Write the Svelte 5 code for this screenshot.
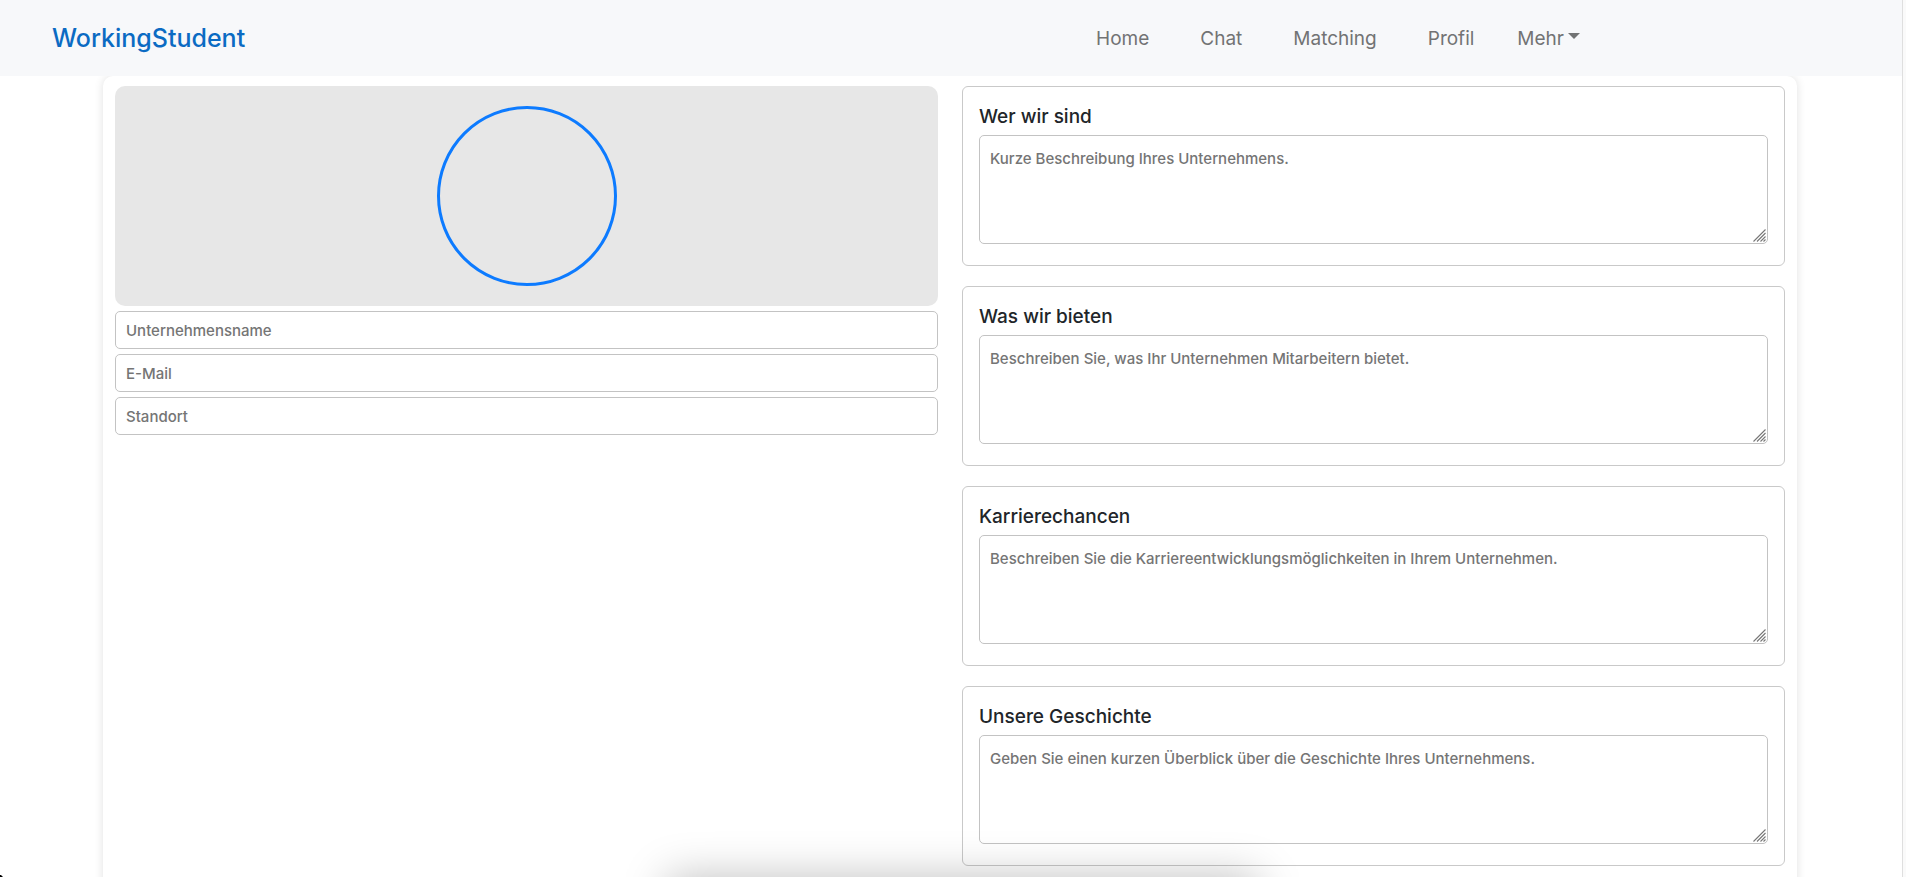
<script>
  const links = ['Home', 'Chat', 'Matching', 'Profil'];
  const fields = [
    { id: 'name', type: 'text', label: 'Unternehmensname' },
    { id: 'email', type: 'email', label: 'E-Mail' },
    { id: 'location', type: 'text', label: 'Standort' }
  ];
  const sections = [
    { id: 'about', title: 'Wer wir sind', hint: 'Kurze Beschreibung Ihres Unternehmens.' },
    { id: 'offer', title: 'Was wir bieten', hint: 'Beschreiben Sie, was Ihr Unternehmen Mitarbeitern bietet.' },
    { id: 'career', title: 'Karrierechancen', hint: 'Beschreiben Sie die Karriereentwicklungsmöglichkeiten in Ihrem Unternehmen.' },
    { id: 'history', title: 'Unsere Geschichte', hint: 'Geben Sie einen kurzen Überblick über die Geschichte Ihres Unternehmens.' }
  ];
</script>

<div class="shell">
  <div class="page">
    <header class="navbar">
      <a class="brand" href="#home">WorkingStudent</a>
      <nav class="nav">
        {#each links as link}
          <a href="#{link.toLowerCase()}">{link}</a>
        {/each}
        <button class="more" type="button" aria-haspopup="true">
          Mehr
          <svg width="12" height="6" viewBox="0 0 12 6" aria-hidden="true"><path d="M0 0h12L6 6z" fill="currentColor" /></svg>
        </button>
      </nav>
    </header>

    <main class="profile">
      <div class="column">
        <div class="cover"><div class="avatar"></div></div>
        {#each fields as field}
          <input id={field.id} type={field.type} placeholder={field.label} aria-label={field.label} />
        {/each}
      </div>

      <div class="column sections">
        {#each sections as section}
          <section class="card">
            <label for={section.id}>{section.title}</label>
            <div class="editor">
              <textarea id={section.id} placeholder={section.hint}></textarea>
              <svg class="grip" width="13" height="13" viewBox="0 0 13 13" aria-hidden="true">
                <path d="M0.5 12.5l12-12M4 12.5l8.5-8.5M7.5 12.5l5-5M10.5 12.5l2-2" stroke="#777" stroke-width="1.1" fill="none" />
              </svg>
            </div>
          </section>
        {/each}
      </div>
    </main>
  </div>
  <div class="track"></div>
  <div class="dock-shadow"></div>
  <svg class="pointer" width="3" height="2" viewBox="0 0 3 2" aria-hidden="true"><path d="M0 0h1l2 2H0z" /></svg>
</div>

<style>
  :global(body) {
    margin: 0;
    background: #fff;
    color: #212529;
    font-family: Inter, 'Liberation Sans', sans-serif;
  }
  .shell {
    position: relative;
    display: flex;
    height: 100vh;
    overflow: hidden;
  }
  .page {
    flex: 1;
    min-width: 0;
  }
  .track {
    width: 3px;
    border-left: 1px solid #dfdfdf;
    background: #fafafa;
  }
  .navbar {
    position: relative;
    display: flex;
    align-items: center;
    justify-content: space-between;
    height: 76px;
    padding: 0 322px 0 52px;
    background: #f7f8fa;
    z-index: 1;
  }
  a {
    color: inherit;
    text-decoration: none;
  }
  .brand {
    color: #0b6bc3;
    font-size: 25px;
    font-weight: 500;
  }
  .nav {
    display: flex;
    align-items: center;
    gap: 51px;
    color: #727374;
    font-size: 19px;
  }
  .more {
    display: flex;
    align-items: center;
    gap: 4px;
    margin-left: -8px;
    padding: 0;
    border: 0;
    background: none;
    color: inherit;
    font: inherit;
  }
  .more svg {
    margin-bottom: 4px;
  }
  .profile {
    display: grid;
    grid-template-columns: 1fr 1fr;
    gap: 24px;
    min-height: 100vh;
    margin: 0 105px 0 103px;
    padding: 10px 12px;
    box-sizing: border-box;
    border-radius: 10px;
    background: #fff;
    box-shadow: 0 0 10px rgba(0, 0, 0, 0.12);
  }
  .column {
    display: flex;
    flex-direction: column;
    gap: 5px;
    min-width: 0;
  }
  .sections {
    gap: 20px;
  }
  .cover {
    display: flex;
    justify-content: center;
    padding: 20px;
    border-radius: 10px;
    background: #e7e7e7;
  }
  .avatar {
    width: 174px;
    height: 174px;
    border: 3px solid #0d7bff;
    border-radius: 50%;
  }
  input,
  textarea {
    box-sizing: border-box;
    width: 100%;
    border: 1px solid #c3c3c3;
    border-radius: 5px;
    background: #fff;
    color: #212529;
    font-family: inherit;
    font-size: 15px;
    font-weight: 500;
    line-height: 24px;
  }
  input {
    height: 38px;
    padding: 0 10px;
  }
  input::placeholder,
  textarea::placeholder {
    color: #757575;
    opacity: 1;
  }
  .card {
    padding: 18px 16px 21px;
    border: 1px solid #c9c9c9;
    border-radius: 6px;
  }
  label {
    display: block;
    margin-bottom: 6px;
    font-size: 19px;
    font-weight: 500;
    line-height: 24px;
  }
  .editor {
    position: relative;
    height: 109px;
  }
  textarea {
    display: block;
    height: 100%;
    padding: 11px 10px;
    resize: none;
  }
  .grip {
    position: absolute;
    right: 2px;
    bottom: 2px;
  }
  .dock-shadow {
    position: absolute;
    top: 100%;
    left: 35%;
    right: 34%;
    height: 80px;
    box-shadow: 0 0 44px rgba(0, 0, 0, 0.25);
    pointer-events: none;
  }
  .pointer {
    position: absolute;
    bottom: 0;
    left: 0;
  }
</style>
